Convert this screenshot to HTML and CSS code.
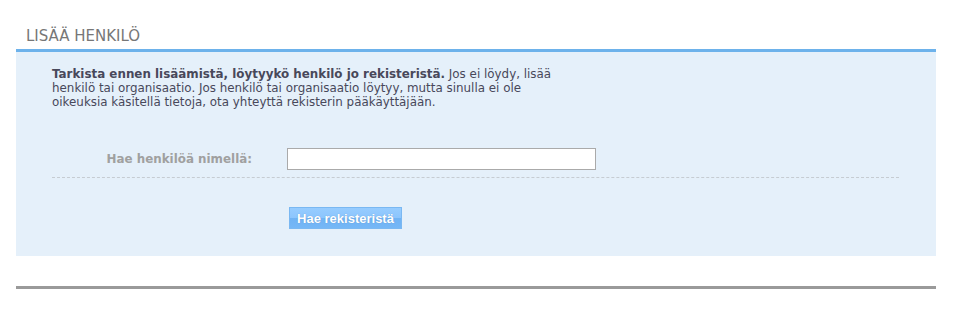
FILE: index.html
```html
<!DOCTYPE html>
<html>

<head>
    <title>Lisää henkilö</title>
    <link rel="stylesheet" href="styles.css">
</head>

<body>
    <div id="page">
        <h2 class="box-title">LISÄÄ HENKILÖ</h2>
        <div class="box">
            <p class="intro"><strong>Tarkista ennen lisäämistä, löytyykö henkilö jo rekisteristä.</strong> Jos ei löydy, lisää henkilö tai organisaatio. Jos henkilö tai organisaatio löytyy, mutta sinulla ei ole oikeuksia käsitellä tietoja, ota yhteyttä rekisterin pääkäyttäjään.</p>
            <form class="search">
                <div class="field">
                    <label for="name">Hae henkilöä nimellä:</label>
                    <input type="text" id="name" name="name">
                </div>
                <div class="actions">
                    <button type="submit" class="submit">Hae rekisteristä</button>
                </div>
            </form>
        </div>
        <div class="footer-line"></div>
    </div>
</body>

</html>
```

FILE: styles.css
```css
body {
    margin: 0;
    font-family: "DejaVu Sans", Verdana, sans-serif;
    font-size: 11.9px;
    color: #48485a;
}

#page {
    width: 920px;
    margin-left: 16px;
    padding-top: 27px;
}

.box-title {
    margin: 0;
    padding: 0 10px 4px;
    font-size: 15px;
    font-weight: normal;
    line-height: 18px;
    color: #777;
}

.box {
    background-color: #e5f0fa;
    border-top: 3px solid #6db2eb;
    padding: 15px 37px 27px 36px;
}

.intro {
    width: 515px;
    margin: 0;
    line-height: 14px;
}

.search {
    margin-top: 39px;
}

.field {
    display: flex;
    align-items: center;
    gap: 35px;
    padding-bottom: 7px;
    border-bottom: 1px dashed #c6ccd2;
}

.field label {
    width: 200px;
    text-align: right;
    font-weight: bold;
    color: #a0a0a0;
}

.field input {
    box-sizing: border-box;
    width: 309px;
    height: 22px;
    margin: 0;
    padding: 1px 3px;
    border: 1px solid #aaa;
    background: #fff;
}

.actions {
    padding: 29px 0 0 237px;
}

.submit {
    width: 113px;
    height: 22px;
    padding: 0;
    border: 1px solid #7ab8f2;
    background: linear-gradient(#96ccff, #8cc5fd 50%, #70b3f4 50%, #75b7f6);
    color: #fff;
    font-family: "Liberation Sans", Arial, sans-serif;
    font-size: 13px;
    font-weight: bold;
    text-shadow: 0 0 1px #5a8fc8;
    cursor: pointer;
}

.footer-line {
    margin-top: 30px;
    border-top: 3px solid #9a9a9a;
}
```
